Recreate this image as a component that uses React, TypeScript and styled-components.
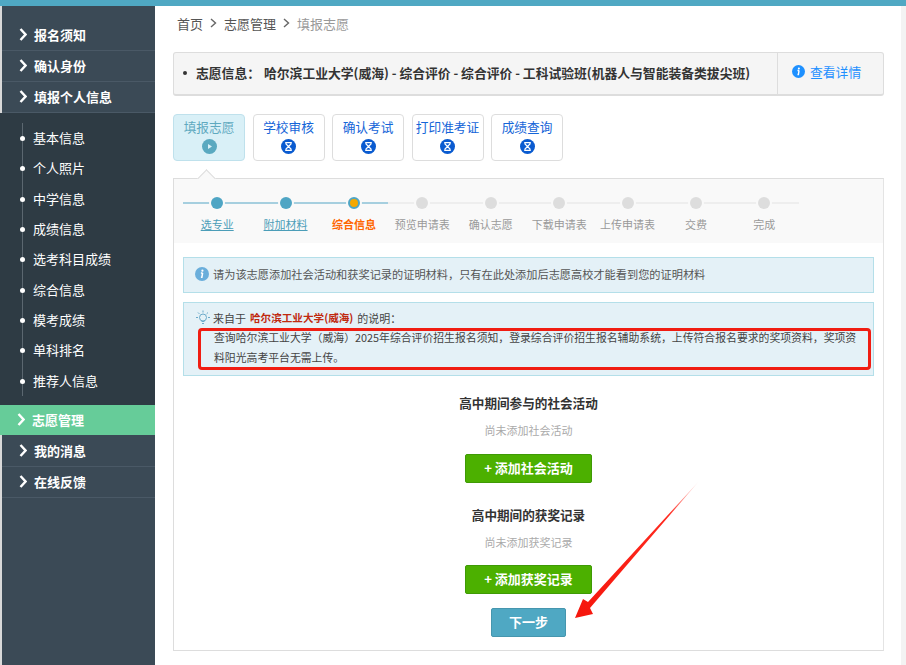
import React from 'react';
import styled, { createGlobalStyle } from 'styled-components';

const GlobalStyle = createGlobalStyle`
  html, body { margin: 0; padding: 0; background: #fff; overflow: hidden; }
  body { font-family: "Microsoft YaHei", "Noto Sans CJK SC", "Liberation Sans", sans-serif; font-size: 13px; color: #333; }
  * { box-sizing: border-box; }
`;

const Page = styled.div`
  position: relative;
  width: 906px;
  height: 665px;
  overflow: hidden;
  border-top: 6px solid #4fa8c3;
  display: flex;
`;

const Sidebar = styled.aside`
  width: 155px;
  flex: none;
  padding: 14px 0 0;
  background: #3b4a56;
  border-left: 2px solid #d9d9d9;
`;

const MenuItem = styled.div<{ $active?: boolean }>`
  display: flex;
  align-items: center;
  gap: 7px;
  height: ${p => (p.$active ? '30px' : '31px')};
  padding: 0 0 2px 17px;
  font-size: 13px;
  font-weight: 700;
  color: #fff;
  background: ${p => (p.$active ? '#66cc99' : 'transparent')};
  border-bottom: ${p => (p.$active ? 'none' : '1px solid #4a5966')};
`;

const SubMenu = styled.div`
  position: relative;
  margin-left: -2px;
  padding: 10px 0 9px 0;
  background: #2e3b44;
  &::before {
    content: '';
    position: absolute;
    left: 22px;
    top: 10px;
    bottom: 9px;
    width: 1px;
    background: #5b6770;
  }
`;

const SubItem = styled.div`
  position: relative;
  height: 30.35px;
  line-height: 29px;
  padding-left: 33px;
  font-size: 13px;
  color: #fff;
  &::before {
    content: '';
    position: absolute;
    left: 20px;
    top: 13px;
    width: 5px;
    height: 5px;
    border-radius: 50%;
    background: #fff;
  }
`;

const ActiveWrap = styled.div`
  margin: 0 0 1px -2px;
`;

const Main = styled.main`
  flex: 1;
  padding: 0 22px 0 18px;
  display: flex;
  flex-direction: column;
`;

const Breadcrumb = styled.div`
  display: flex;
  align-items: center;
  gap: 7px;
  height: 36px;
  padding: 0 0 2px 4px;
  font-size: 13px;
  color: #555;
`;

const CrumbCurrent = styled.span`
  color: #999;
`;

const InfoBox = styled.div`
  display: flex;
  align-items: stretch;
  width: 711px;
  height: 44px;
  margin-top: 10px;
  background: #f5f5f5;
  border: 1px solid #ddd;
  border-bottom-width: 2px;
  border-radius: 3px;
`;

const InfoText = styled.div`
  flex: 1;
  display: flex;
  align-items: center;
  padding: 0 0 2px 9px;
  font-size: 12.8px;
  font-weight: 700;
  color: #333;
  white-space: nowrap;
`;

const Dot = styled.span`
  width: 4px;
  height: 4px;
  border-radius: 50%;
  background: #333;
  margin-right: 9px;
`;

const InfoLabel = styled.span`
  margin-right: 4px;
`;

const DetailLink = styled.div`
  width: 106px;
  display: flex;
  align-items: center;
  gap: 5px;
  padding: 0 0 4px 14px;
  font-size: 12.8px;
  color: #1e90ff;
  border-left: 1px solid #ddd;
`;

const Tabs = styled.div`
  display: flex;
  gap: 7.5px;
  margin-top: 18px;
`;

const Tab = styled.div<{ $active?: boolean }>`
  width: 72px;
  height: 47px;
  display: flex;
  flex-direction: column;
  align-items: center;
  gap: 3px;
  padding-top: 3px;
  font-size: 12.7px;
  line-height: 18px;
  white-space: nowrap;
  color: ${p => (p.$active ? '#5fa9bf' : '#1565d8')};
  background: ${p => (p.$active ? '#d9f0f7' : '#fff')};
  border: 1px solid ${p => (p.$active ? '#bfe1ec' : '#ddd')};
  border-radius: 4px;
`;

const Panel = styled.section`
  position: relative;
  width: 711px;
  height: 473px;
  margin-top: 17px;
  border: 1px solid #ddd;
  border-right-color: #e4e4e4;
  &::before {
    content: '';
    position: absolute;
    left: 26px;
    top: -7px;
    width: 12px;
    height: 12px;
    background: #f9f9f9;
    border-left: 1px solid #ddd;
    border-top: 1px solid #ddd;
    transform: rotate(45deg);
  }
`;

const StepBar = styled.div`
  position: relative;
  height: 64px;
  padding: 18px 0 0 9px;
  display: flex;
  background: #f9f9f9;
`;

const Step = styled.div`
  position: relative;
  z-index: 1;
  width: 68.4px;
  flex: none;
  display: flex;
  flex-direction: column;
  align-items: center;
  gap: 7px;
`;

const StepLine = styled.div<{ $done?: boolean }>`
  position: absolute;
  top: 5px;
  left: 0;
  right: 0;
  height: 2px;
  background: ${p => (p.$done ? '#a6cfdf' : '#eeeeee')};
`;

const StepDot = styled.span<{ $state: string }>`
  position: relative;
  width: 12px;
  height: 12px;
  border-radius: 50%;
  box-shadow: 0 0 0 2px #f9f9f9;
  background: ${p => (p.$state === 'todo' ? '#dddddd' : p.$state === 'current' ? '#f5a800' : '#4fa5c4')};
  border: ${p => (p.$state === 'current' ? '2px solid #4fa5c4' : 'none')};
`;

const StepLabel = styled.span<{ $state: string }>`
  font-size: 11px;
  line-height: 16px;
  white-space: nowrap;
  font-weight: ${p => (p.$state === 'current' ? 700 : 400)};
  color: ${p => (p.$state === 'todo' ? '#999' : p.$state === 'current' ? '#f60' : '#4b9db8')};
  text-decoration: ${p => (p.$state === 'done' ? 'underline' : 'none')};
`;

const Body = styled.div`
  padding: 14px 9px 0;
  display: flex;
  flex-direction: column;
  align-items: center;
`;

const Alert = styled.div`
  width: 691px;
  background: #e4f1f7;
  border: 1px solid #b4dfe9;
`;

const TipAlert = styled(Alert)`
  height: 36px;
  display: flex;
  align-items: center;
  gap: 4px;
  padding: 0 0 2px 11px;
  font-size: 11.2px;
  color: #555;
`;

const NoteAlert = styled(Alert)`
  height: 74px;
  margin-top: 9px;
  padding: 5px 0 0 11px;
  font-size: 11px;
  color: #444;
`;

const NoteHead = styled.div`
  display: flex;
  align-items: center;
  gap: 2px;
  height: 19px;
`;

const School = styled.strong`
  color: #c0290f;
  font-size: 10.6px;
  margin: 0 2px;
`;

const NoteBody = styled.div`
  width: 648px;
  margin-left: 19px;
  font-size: 10.85px;
  line-height: 20px;
  color: #444;
`;

const SectionTitle = styled.h3<{ $first?: boolean }>`
  margin: ${p => (p.$first ? '17px' : '22px')} 0 0;
  font-size: 12.6px;
  line-height: 20px;
  font-weight: 700;
  color: #333;
`;

const Empty = styled.div`
  margin-top: 8px;
  font-size: 11px;
  line-height: 18px;
  color: #aaa;
`;

const AddButton = styled.button<{ $tight?: boolean }>`
  width: 127px;
  height: 29px;
  margin-top: ${p => (p.$tight ? '14px' : '15px')};
  padding: 0 0 2px;
  font-family: inherit;
  font-size: 13px;
  font-weight: 700;
  color: #fff;
  background: #4cb000;
  border: 1px solid #3f9a05;
  border-radius: 2px;
`;

const NextButton = styled.button`
  width: 75px;
  height: 29px;
  margin-top: 14px;
  padding: 0 0 2px;
  font-family: inherit;
  font-size: 13px;
  font-weight: 700;
  color: #fff;
  background: #4fa8c3;
  border: 1px solid #4696ae;
  border-radius: 2px;
`;

const RedBox = styled.div`
  position: absolute;
  left: 198px;
  top: 322px;
  width: 673px;
  height: 42px;
  border: 3px solid #f01d12;
  border-radius: 4px;
  pointer-events: none;
`;

const Arrow = styled.svg`
  position: absolute;
  left: 560px;
  top: 464px;
`;

const EdgeStrip = styled.div`
  position: absolute;
  right: 0;
  top: 0;
  bottom: 0;
  width: 5px;
  background: #f3f3f3;
`;

const Chevron = () => (
  <svg width="8" height="13" viewBox="0 0 8 13">
    <path d="M1.5 1 L6.5 6.5 L1.5 12" fill="none" stroke="#fff" strokeWidth="2.4" />
  </svg>
);

const CrumbArrow = () => (
  <svg width="7" height="10" viewBox="0 0 7 10">
    <path d="M1 1 L5.5 5 L1 9" fill="none" stroke="#666" strokeWidth="1.4" />
  </svg>
);

const Hourglass = () => (
  <svg width="15" height="15" viewBox="0 0 15 15">
    <circle cx="7.5" cy="7.5" r="7.5" fill="#0a5bd0" />
    <path d="M4.2 3.7 H10.8 M4.2 11.3 H10.8 M5 3.7 V5 L7.5 7.5 L5 10 V11.3 M10 3.7 V5 L7.5 7.5 L10 10 V11.3" fill="none" stroke="#fff" strokeWidth="1.2" />
  </svg>
);

const PlayIcon = () => (
  <svg width="15" height="15" viewBox="0 0 15 15">
    <circle cx="7.5" cy="7.5" r="7.5" fill="#5aa9c0" />
    <path d="M6 5 L10 7.5 L6 10 Z" fill="#d9f0f7" />
  </svg>
);

const InfoIcon = ({ color, size }: { color: string; size: number }) => (
  <svg width={size} height={size} viewBox="0 0 14 14">
    <circle cx="7" cy="7" r="7" fill={color} />
    <circle cx="7.4" cy="3.7" r="1.1" fill="#fff" />
    <path d="M7.6 5.8 L6.9 10.2 H5.9 M5.9 5.9 H7.6" fill="none" stroke="#fff" strokeWidth="1.5" />
  </svg>
);

const BulbIcon = () => (
  <svg width="16" height="16" viewBox="0 0 16 16" fill="none" stroke="#6aa9c9" strokeWidth="1">
    <circle cx="8" cy="7.5" r="3.5" />
    <path d="M6.5 11.5 H9.5 M7 13.5 H9 M8 0.5 V2.5 M1 7.5 H3 M13 7.5 H15 M3 2.5 L4.4 3.9 M13 2.5 L11.6 3.9" />
  </svg>
);

const firstMenu = ['报名须知', '确认身份', '填报个人信息'];
const subMenu = ['基本信息', '个人照片', '中学信息', '成绩信息', '选考科目成绩', '综合信息', '模考成绩', '单科排名', '推荐人信息'];
const lastMenu = ['我的消息', '在线反馈'];
const tabs = ['学校审核', '确认考试', '打印准考证', '成绩查询'];
const steps = [
  { label: '选专业', state: 'done' },
  { label: '附加材料', state: 'done' },
  { label: '综合信息', state: 'current' },
  { label: '预览申请表', state: 'todo' },
  { label: '确认志愿', state: 'todo' },
  { label: '下载申请表', state: 'todo' },
  { label: '上传申请表', state: 'todo' },
  { label: '交费', state: 'todo' },
  { label: '完成', state: 'todo' }
];

const App: React.FC = () => (
  <Page>
    <GlobalStyle />
    <Sidebar>
      {firstMenu.map(m => (
        <MenuItem key={m}><Chevron />{m}</MenuItem>
      ))}
      <SubMenu>
        {subMenu.map(s => <SubItem key={s}>{s}</SubItem>)}
      </SubMenu>
      <ActiveWrap>
        <MenuItem $active><Chevron />志愿管理</MenuItem>
      </ActiveWrap>
      {lastMenu.map(m => (
        <MenuItem key={m}><Chevron />{m}</MenuItem>
      ))}
    </Sidebar>

    <Main>
      <Breadcrumb>
        首页 <CrumbArrow /> 志愿管理 <CrumbArrow /> <CrumbCurrent>填报志愿</CrumbCurrent>
      </Breadcrumb>

      <InfoBox>
        <InfoText>
          <Dot />
          <InfoLabel>志愿信息：</InfoLabel>
          哈尔滨工业大学(威海) - 综合评价 - 综合评价 - 工科试验班(机器人与智能装备类拔尖班)
        </InfoText>
        <DetailLink><InfoIcon color="#1e90ff" size={13} />查看详情</DetailLink>
      </InfoBox>

      <Tabs>
        <Tab $active>填报志愿<PlayIcon /></Tab>
        {tabs.map(t => <Tab key={t}>{t}<Hourglass /></Tab>)}
      </Tabs>

      <Panel>
        <StepBar>
          {steps.map((s, i) => (
            <Step key={s.label}>
              <StepLine $done={i < 2 || s.state === 'current'} />
              <StepDot $state={s.state} />
              <StepLabel $state={s.state}>{s.label}</StepLabel>
            </Step>
          ))}
        </StepBar>
        <Body>
          <TipAlert>
            <InfoIcon color="#6aaedb" size={14} />
            请为该志愿添加社会活动和获奖记录的证明材料，只有在此处添加后志愿高校才能看到您的证明材料
          </TipAlert>
          <NoteAlert>
            <NoteHead><BulbIcon />来自于<School>哈尔滨工业大学(威海)</School>的说明：</NoteHead>
            <NoteBody>查询哈尔滨工业大学（威海）2025年综合评价招生报名须知，登录综合评价招生报名辅助系统，上传符合报名要求的奖项资料，奖项资料阳光高考平台无需上传。</NoteBody>
          </NoteAlert>
          <SectionTitle $first>高中期间参与的社会活动</SectionTitle>
          <Empty>尚未添加社会活动</Empty>
          <AddButton>+ 添加社会活动</AddButton>
          <SectionTitle>高中期间的获奖记录</SectionTitle>
          <Empty>尚未添加获奖记录</Empty>
          <AddButton $tight>+ 添加获奖记录</AddButton>
          <NextButton>下一步</NextButton>
        </Body>
      </Panel>
    </Main>

    <RedBox />
    <Arrow width="150" height="160" viewBox="0 0 150 160">
      <defs>
        <linearGradient id="arrowFade" x1="140" y1="10" x2="15" y2="148" gradientUnits="userSpaceOnUse">
          <stop offset="0" stopColor="#ff2a1f" stopOpacity="0" />
          <stop offset="0.25" stopColor="#ff2a1f" />
          <stop offset="1" stopColor="#f5160c" />
        </linearGradient>
      </defs>
      <path d="M140 10 L28 132 L23 129 L15 148 L33 144 L30 138 Z" fill="url(#arrowFade)" />
    </Arrow>
    <EdgeStrip />
  </Page>
);

export default App;
